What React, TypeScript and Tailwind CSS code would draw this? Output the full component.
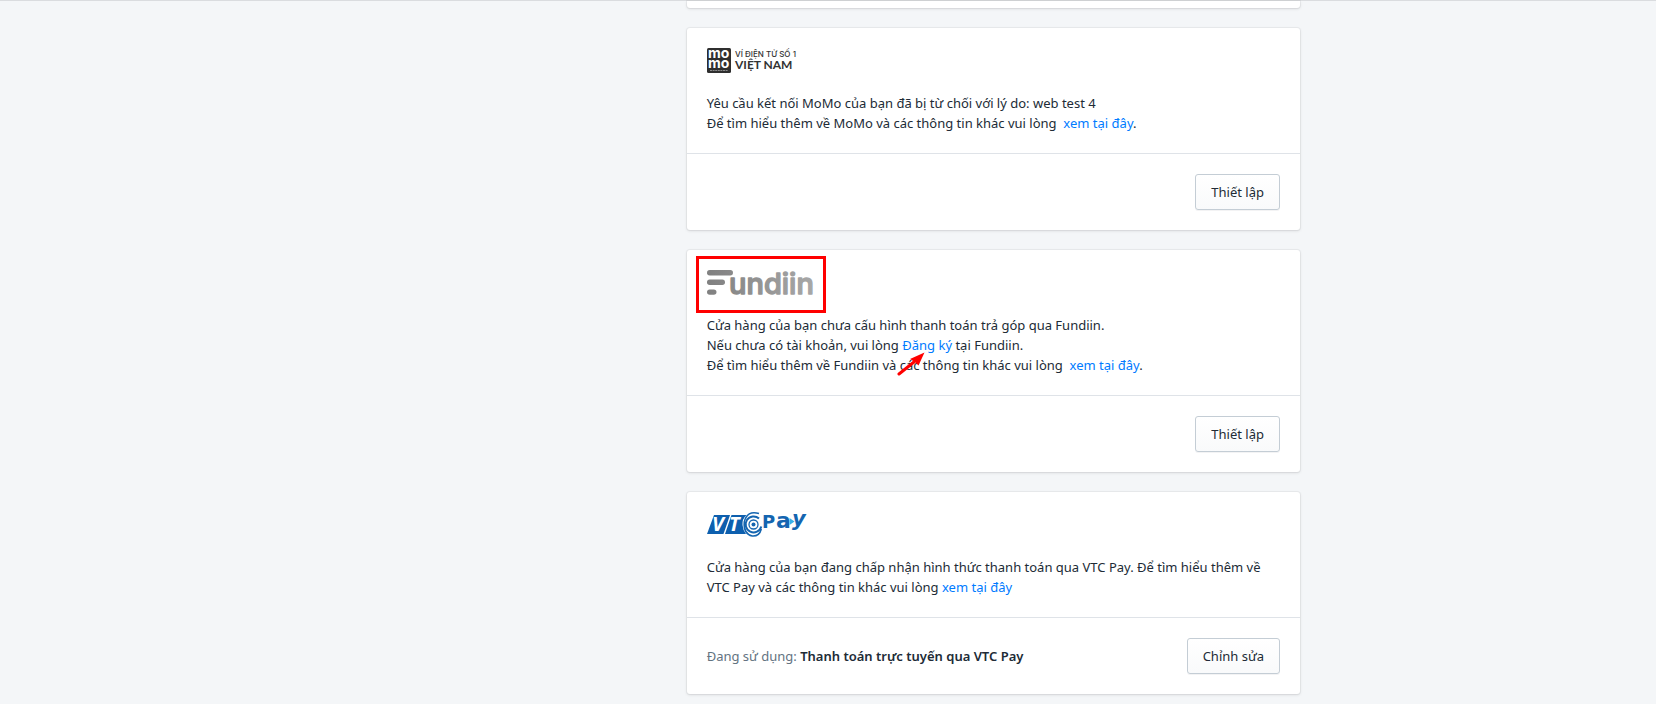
import type { ReactNode } from "react";

interface GatewayCardProps {
  logo: ReactNode;
  children: ReactNode;
  status?: ReactNode;
  actionLabel: string;
}

function GatewayCard({ logo, children, status, actionLabel }: GatewayCardProps) {
  return (
    <section className="rounded-[3px] bg-white shadow-[0_0_0_1px_rgba(63,63,68,0.05),0_1px_3px_0_rgba(63,63,68,0.15)]">
      <div className="p-5">
        <div className="mb-5 h-[25px]">{logo}</div>
        {children}
      </div>
      <div className="flex items-center justify-between gap-4 border-t border-[#dfe3e8] p-5">
        <p className="text-[#637381]">{status}</p>
        <button
          type="button"
          className="h-9 shrink-0 rounded-[3px] border border-[#c4cdd5] bg-linear-to-b from-white to-[#f9fafb] px-[15px] shadow-[0_1px_0_0_rgba(22,29,37,0.05)] hover:to-[#f4f6f8]"
        >
          {actionLabel}
        </button>
      </div>
    </section>
  );
}

function TextLink({ children }: { children: ReactNode }) {
  return (
    <a href="#" className="text-[#007bff] hover:underline">
      {children}
    </a>
  );
}

function MomoLogo() {
  return (
    <svg width="88" height="25" viewBox="0 0 88 25" role="img" aria-label="MoMo" className="overflow-visible">
      <rect width="24" height="25" rx="1.5" fill="#2f2f2f" />
      <g fill="#fff" className="font-['Inter',sans-serif] text-[14px] font-bold">
        <text x="1" y="10">mo</text>
        <text x="1" y="20">mo</text>
      </g>
      <path d="M3 22.500h18" stroke="#8a8a8a" strokeWidth="1" strokeDasharray="2 0.6" />
      <g fill="#333">
        <text x="28" y="9" className="font-['Inter',sans-serif] text-[8px] font-medium">VÍ ĐIỆN TỬ SỐ 1</text>
        <text x="28" y="21" className="font-['Lato',sans-serif] text-[12px] font-bold">VIỆT NAM</text>
      </g>
    </svg>
  );
}

function FundiinLogo() {
  return (
    <svg width="108" height="25" viewBox="0 0 108 25" role="img" aria-label="Fundiin" className="overflow-visible">
      <defs>
        <linearGradient id="fundiin-grey" gradientUnits="userSpaceOnUse" x1="0" y1="0" x2="108" y2="0">
          <stop offset="0" stopColor="#808080" />
          <stop offset="1" stopColor="#a8a8a8" />
        </linearGradient>
      </defs>
      <g fill="url(#fundiin-grey)">
        <rect x="0" y="0" width="26" height="5.4" rx="2.7" />
        <rect x="0" y="9.6" width="18" height="5.4" rx="2.7" />
        <rect x="0" y="19.4" width="9.5" height="5.4" rx="2.7" />
        <text
          x="22"
          y="24"
          stroke="url(#fundiin-grey)"
          strokeWidth="1.4"
          strokeLinejoin="round"
          className="font-['Inter',sans-serif] text-[29px] font-medium"
        >
          undiin
        </text>
      </g>
    </svg>
  );
}

function VtcPayLogo() {
  return (
    <svg width="100" height="25" viewBox="0 0 100 25" role="img" aria-label="VTC Pay" className="overflow-visible">
      <path d="M7 3h16l-6.500 19H0z" fill="#0d5fae" />
      <path d="M24.500 3h15q-4.500 4-4 10 .4 5 3.500 9H18z" fill="#0d5fae" />
      <g fill="#fff" className="font-['Open_Sans',sans-serif] text-[20px] font-bold italic">
        <text x="5" y="19">V</text>
        <text x="22" y="19">T</text>
      </g>
      <g fill="none" stroke="#1465b0">
        <circle cx="46.500" cy="12.500" r="2" fill="#1465b0" stroke="none" />
        <circle cx="46.500" cy="12.500" r="4.500" strokeWidth="1.300" />
        <path d="M52 6.500a8 8 0 1 0 2.300 8" strokeWidth="2" />
        <path d="M52 1.500Q40-2 37.300 10q-1 12 8 14 7 .5 9-7" strokeWidth="1.600" />
      </g>
      <g fill="#1465b0" className="font-['DejaVu_Sans',sans-serif]">
        <text x="55" y="16" className="text-[18px] font-bold">P</text>
        <text x="69" y="16" className="text-[22px] font-bold">a</text>
        <text x="85" y="14" className="text-[21px] font-bold italic">y</text>
      </g>
      <path d="M82.500 6l5 3.500-5 3.500z" fill="#38b0e8" />
    </svg>
  );
}

export default function App() {
  return (
    <main className="min-h-screen border-t border-[#dadcdf] bg-[#f4f6f8] pb-[10px] font-['Noto_Sans','Open_Sans',sans-serif] text-[13px] leading-5 text-[#212b36]">
      <div className="mx-auto flex max-w-[976px] justify-end px-4">
        <div className="flex w-2/3 flex-col gap-5 pl-4">
          <div className="h-[7px] rounded-b-[3px] bg-white shadow-[0_0_0_1px_rgba(63,63,68,0.05),0_1px_3px_0_rgba(63,63,68,0.15)]" />

          <GatewayCard logo={<MomoLogo />} actionLabel="Thiết lập">
            <p>Yêu cầu kết nối MoMo của bạn đã bị từ chối với lý do: web test 4</p>
            <p>
              Để tìm hiểu thêm về MoMo và các thông tin khác vui lòng &nbsp;
              <TextLink>xem tại đây</TextLink>.
            </p>
          </GatewayCard>

          <GatewayCard
            actionLabel="Thiết lập"
            logo={
              <div className="relative w-[108px]">
                <FundiinLogo />
                <span className="absolute -inset-x-[11px] -top-[14px] -bottom-[18px] border-3 border-[#ff0000]" />
              </div>
            }
          >
            <p>Cửa hàng của bạn chưa cấu hình thanh toán trả góp qua Fundiin.</p>
            <p>
              Nếu chưa có tài khoản, vui lòng{" "}
              <span className="relative">
                <TextLink>Đăng ký</TextLink>
                <svg
                  width="28"
                  height="24"
                  viewBox="0 0 28 24"
                  aria-hidden="true"
                  className="pointer-events-none absolute top-4 -left-[5px]"
                >
                  <path d="M2 22L17 10" stroke="#f00" strokeWidth="3" strokeLinecap="round" />
                  <path d="M27.500 0.500L21.500 13.500 18.500 10.500 13 7z" fill="#f00" />
                </svg>
              </span>{" "}
              tại Fundiin.
            </p>
            <p>
              Để tìm hiểu thêm về Fundiin và các thông tin khác vui lòng &nbsp;
              <TextLink>xem tại đây</TextLink>.
            </p>
          </GatewayCard>

          <GatewayCard
            logo={<VtcPayLogo />}
            actionLabel="Chỉnh sửa"
            status={
              <>
                Đang sử dụng:{" "}
                <strong className="font-semibold text-[#212b36]">Thanh toán trực tuyến qua VTC Pay</strong>
              </>
            }
          >
            <p>
              Cửa hàng của bạn đang chấp nhận hình thức thanh toán qua VTC Pay. Để tìm hiểu thêm về VTC Pay và
              các thông tin khác vui lòng <TextLink>xem tại đây</TextLink>
            </p>
          </GatewayCard>
        </div>
      </div>
    </main>
  );
}
